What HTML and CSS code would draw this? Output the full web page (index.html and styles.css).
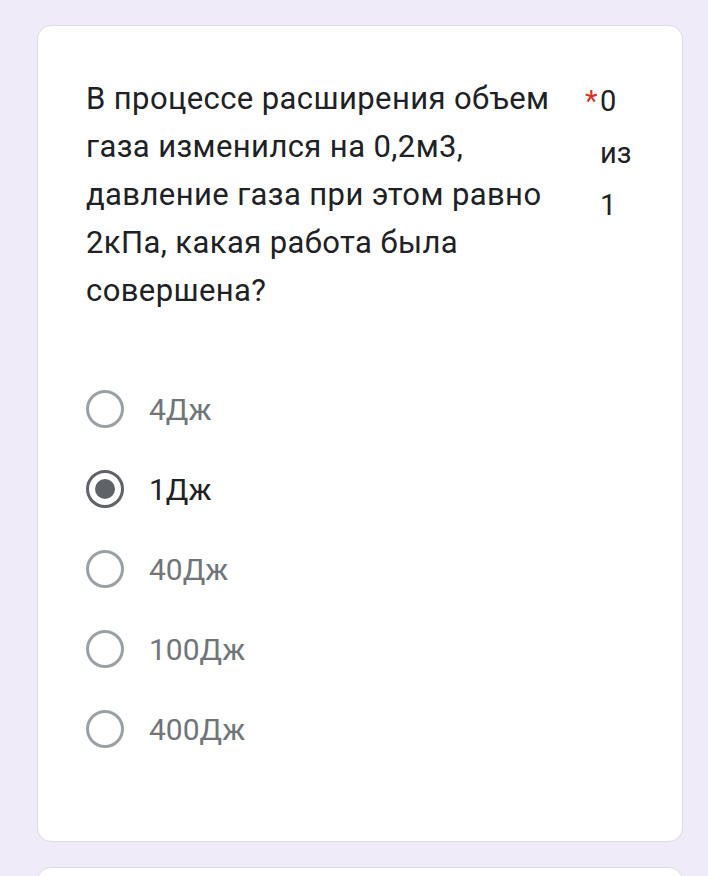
FILE: index.html
```html
<!DOCTYPE html>
<html lang="ru">
<head>
    <meta charset="UTF-8">
    <meta name="viewport" content="width=device-width, initial-scale=1.0">
    <title>Вопрос</title>
    <link rel="stylesheet" href="styles.css">
</head>
<body>
    <div class="page">
        <div class="card">
            <div class="question-head">
                <div class="question-title">В процессе расширения объем газа изменился на 0,2м3, давление газа при этом равно 2кПа, какая работа была совершена?</div>
                <span class="required">*</span>
                <div class="points">0 из 1</div>
            </div>

            <div class="options">
                <div class="option">
                    <span class="radio"></span>
                    <span class="option-label">4Дж</span>
                </div>
                <div class="option checked">
                    <span class="radio"></span>
                    <span class="option-label">1Дж</span>
                </div>
                <div class="option">
                    <span class="radio"></span>
                    <span class="option-label">40Дж</span>
                </div>
                <div class="option">
                    <span class="radio"></span>
                    <span class="option-label">100Дж</span>
                </div>
                <div class="option">
                    <span class="radio"></span>
                    <span class="option-label">400Дж</span>
                </div>
            </div>
        </div>

        <div class="card next"></div>
    </div>
</body>
</html>
```

FILE: styles.css
```css
body {
    font-family: Roboto, 'Noto Sans', sans-serif;
    background-color: #efebf8; /* lavender form background */
    color: #202124;
    margin: 0;
}
.page {
    padding: 25px 25px 0 37px;
}
.card {
    background: #fff;
    border: 1px solid #dadce0;
    border-radius: 14px;
    padding: 49px 48px 72px 48px;
}
.card.next {
    margin-top: 25px;
    height: 60px;
    padding: 0;
}
.question-head {
    display: flex;
    align-items: flex-start;
}
.question-title {
    flex: 1;
    font-size: 31px;
    line-height: 48px;
    letter-spacing: 0.4px;
}
.required {
    color: #d93025;
    font-size: 29px;
    line-height: 52px;
    margin-left: 5px;
    width: 15px;
}
.points {
    width: 34px;
    font-size: 29px;
    line-height: 52px;
    color: #202124;
}
.options {
    margin-top: 54px;
}
.option {
    display: flex;
    align-items: center;
    height: 80px;
}
.radio {
    box-sizing: border-box;
    width: 38px;
    height: 38px;
    border: 3.5px solid #9aa0a6;
    border-radius: 50%;
    margin-right: 25px;
    display: flex;
    align-items: center;
    justify-content: center;
}
.option-label {
    font-size: 30px;
    color: #70757a;
}
.option.checked .radio {
    border-color: #5f6368;
}
.option.checked .radio::after {
    content: "";
    width: 20px;
    height: 20px;
    border-radius: 50%;
    background: #5f6368;
}
.option.checked .option-label {
    color: #202124;
}
```
